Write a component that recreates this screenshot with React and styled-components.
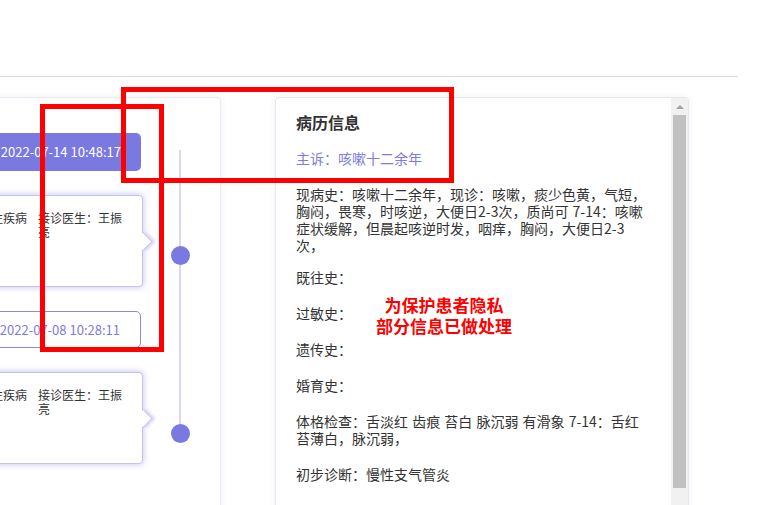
import React from 'react';
import styled, { createGlobalStyle } from 'styled-components';

const GlobalStyle = createGlobalStyle`
  html, body {
    margin: 0;
    padding: 0;
    background: #fff;
  }
  body {
    font-family: "Noto Sans CJK SC", "Noto Sans", sans-serif;
    color: #333;
    text-spacing-trim: space-all;
  }
`;

const Page = styled.div`
  position: relative;
  width: 757px;
  height: 505px;
  overflow: hidden;
  background: #fff;
`;

const Header = styled.div`
  width: 738px;
  height: 76px;
  border-bottom: 1px solid #dcdcdc;
`;

const Main = styled.div`
  display: flex;
  align-items: flex-start;
  gap: 54px;
  padding-top: 20px;
`;

const LeftPanel = styled.div`
  box-sizing: border-box;
  width: 321px;
  height: 440px;
  margin-left: -100px;
  flex-shrink: 0;
  padding: 35px 30px 0 20px;
  background: #fff;
  border: 1px solid #e9e9f3;
  border-radius: 4px;
  box-shadow: 0 0 6px rgba(120, 120, 180, 0.1);
`;

const Item = styled.div`
  display: flex;
  gap: 27px;
  height: 178px;
`;

const Content = styled.div`
  flex: 1;
  min-width: 0;
  display: flex;
  flex-direction: column;
  align-items: flex-end;
`;

const DatePill = styled.div`
  box-sizing: border-box;
  height: ${(p) => (p.$active ? '38px' : '37px')};
  line-height: ${(p) => (p.$active ? '38px' : '35px')};
  margin-right: 2px;
  padding: 0 20px;
  font-size: 13px;
  border-radius: 5px;
  white-space: nowrap;
  color: ${(p) => (p.$active ? '#fff' : '#7d7be3')};
  background: ${(p) => (p.$active ? '#7979e1' : '#fff')};
  border: ${(p) => (p.$active ? 'none' : '1px solid #8a88e6')};
`;

const Card = styled.div`
  position: relative;
  box-sizing: border-box;
  align-self: stretch;
  height: 92px;
  margin-top: 24px;
  padding: 15px 14px 0 0;
  display: flex;
  justify-content: flex-end;
  gap: 11px;
  font-size: 12px;
  line-height: 14px;
  color: #333;
  background: #fff;
  border: 1px solid #c3c2f0;
  border-radius: 4px;
  box-shadow: 0 0 6px rgba(123, 123, 227, 0.5);

  &::after {
    content: '';
    position: absolute;
    right: -8px;
    top: 39px;
    width: 12px;
    height: 12px;
    background: #fff;
    border-top: 1px solid #c3c2f0;
    border-right: 1px solid #c3c2f0;
    transform: rotate(45deg);
    box-shadow: 2px -2px 3px rgba(123, 123, 227, 0.3);
  }
`;

const CardCol = styled.div`
  white-space: ${(p) => (p.$wrap ? 'normal' : 'nowrap')};
  width: ${(p) => (p.$wrap ? '90px' : 'auto')};
  flex-shrink: 0;
`;

const Rail = styled.div`
  width: 20px;
  flex-shrink: 0;
  display: flex;
  flex-direction: column;
  align-items: center;
`;

const Seg = styled.div`
  width: 2px;
  height: ${(p) => p.$h || 'auto'};
  flex: ${(p) => (p.$grow ? 1 : 'none')};
  background: ${(p) => (p.$on ? '#d6d6f6' : 'transparent')};
`;

const Dot = styled.div`
  width: 19px;
  height: 19px;
  border-radius: 50%;
  background: #7979e1;
  flex-shrink: 0;
`;

const RightPanel = styled.div`
  box-sizing: border-box;
  width: 414px;
  height: 440px;
  flex-shrink: 0;
  display: flex;
  background: #fff;
  border: 1px solid #e6e6ef;
  border-radius: 4px;
  box-shadow: 0 0 6px rgba(120, 120, 180, 0.1);
  overflow: hidden;
`;

const Record = styled.div`
  flex: 1;
  padding: 16px 23px 0 20px;
  font-size: 14px;
  line-height: 17px;
  word-spacing: 1px;
  color: #333;
`;

const Title = styled.div`
  font-size: 16px;
  font-weight: bold;
  margin-bottom: 19px;
`;

const Para = styled.div`
  margin-bottom: ${(p) => (p.$tight ? '15px' : '19px')};
  color: ${(p) => (p.$accent ? '#7f7ae6' : '#333')};
`;

const Scrollbar = styled.div`
  width: 17px;
  display: flex;
  flex-direction: column;
  align-items: center;
  background: #f1f1f1;
`;

const ScrollUp = styled.div`
  height: 17px;
  width: 100%;
  display: flex;
  align-items: center;
  justify-content: center;

  &::before {
    content: '';
    width: 0;
    height: 0;
    border-left: 4px solid transparent;
    border-right: 4px solid transparent;
    border-bottom: 4px solid #a3a3a3;
  }
`;

const Thumb = styled.div`
  width: 13px;
  height: 373px;
  background: #c1c1c1;
`;

const Mark = styled.div`
  position: absolute;
  box-sizing: border-box;
  border: 5px solid #ff0000;
  pointer-events: none;
`;

const Notice = styled.div`
  position: absolute;
  left: 369px;
  top: 294px;
  width: 150px;
  text-align: center;
  font-size: 17px;
  line-height: 21px;
  font-weight: bold;
  color: #ff0000;
`;

const visits = [
  { date: '2022-07-14 10:48:17', kind: '诊断类型：慢性疾病', doctor: '接诊医生：王振亮' },
  { date: '2022-07-08 10:28:11', kind: '诊断类型：慢性疾病', doctor: '接诊医生：王振亮' },
];

const record = [
  { t: '现病史：咳嗽十二余年，现诊：咳嗽，痰少色黄，气短，胸闷，畏寒，时咳逆，大便日2-3次，质尚可 7-14：咳嗽症状缓解，但晨起咳逆时发，咽痒，胸闷，大便日2-3次，', tight: true },
  { t: '既往史：' },
  { t: '过敏史：' },
  { t: '遗传史：' },
  { t: '婚育史：' },
  { t: '体格检查：舌淡红 齿痕 苔白 脉沉弱 有滑象 7-14：舌红苔薄白，脉沉弱，' },
  { t: '初步诊断：慢性支气管炎' },
];

export default function App() {
  return (
    <Page>
      <GlobalStyle />
      <Header />
      <Main>
        <LeftPanel>
          {visits.map((v, i) => (
            <Item key={v.date}>
              <Content>
                <DatePill $active={i === 0}>{v.date}</DatePill>
                <Card>
                  <CardCol>{v.kind}</CardCol>
                  <CardCol $wrap>{v.doctor}</CardCol>
                </Card>
              </Content>
              <Rail>
                <Seg $h="17px" $on={i > 0} />
                <Seg $h="96px" $on />
                <Dot />
                <Seg $grow $on={i < visits.length - 1} />
              </Rail>
            </Item>
          ))}
        </LeftPanel>
        <RightPanel>
          <Record>
            <Title>病历信息</Title>
            <Para $accent>主诉：咳嗽十二余年</Para>
            {record.map((r) => (
              <Para key={r.t} $tight={r.tight}>{r.t}</Para>
            ))}
          </Record>
          <Scrollbar>
            <ScrollUp />
            <Thumb />
          </Scrollbar>
        </RightPanel>
      </Main>
      <Mark style={{ left: 40, top: 104, width: 124, height: 248 }} />
      <Mark style={{ left: 121, top: 87, width: 333, height: 96 }} />
      <Notice>
        为保护患者隐私
        <br />
        部分信息已做处理
      </Notice>
    </Page>
  );
}
